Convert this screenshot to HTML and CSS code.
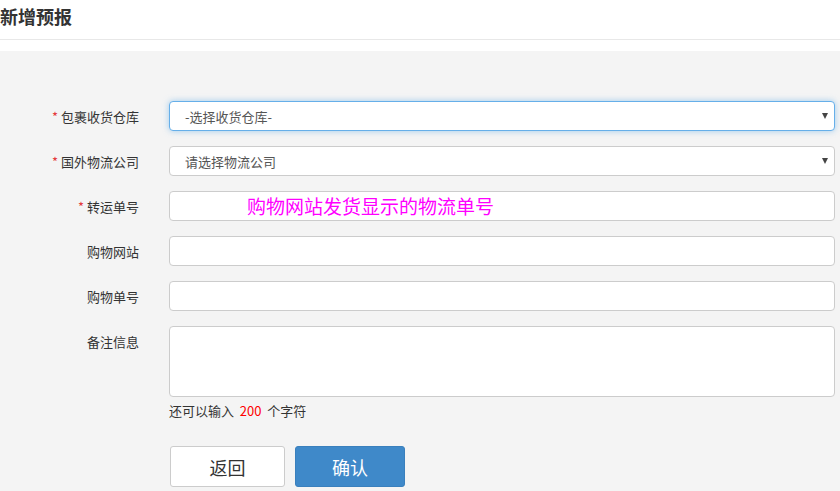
FILE: index.html
```html
<!DOCTYPE html>
<html lang="zh-CN">
<head>
<meta charset="utf-8">
<title>新增预报</title>
<link rel="stylesheet" href="styles.css">
</head>
<body>
<div class="header"><h1 class="title">新增预报</h1></div>
<div class="spacer"></div>
<div class="main">
  <form class="form">
    <div class="row">
      <label class="label"><span class="req">*</span>包裹收货仓库</label>
      <div class="ctrl select-wrap">
        <div class="field select focus">-选择收货仓库-</div>
        <span class="arrow"></span>
      </div>
    </div>
    <div class="row">
      <label class="label"><span class="req">*</span>国外物流公司</label>
      <div class="ctrl select-wrap">
        <div class="field select">请选择物流公司</div>
        <span class="arrow"></span>
      </div>
    </div>
    <div class="row">
      <label class="label"><span class="req">*</span>转运单号</label>
      <div class="ctrl">
        <div class="field input"><span class="ph">购物网站发货显示的物流单号</span></div>
      </div>
    </div>
    <div class="row">
      <label class="label">购物网站</label>
      <div class="ctrl"><div class="field input"></div></div>
    </div>
    <div class="row">
      <label class="label">购物单号</label>
      <div class="ctrl"><div class="field input"></div></div>
    </div>
    <div class="row row-area">
      <label class="label label-top">备注信息</label>
      <div class="ctrl">
        <div class="field area"></div>
        <div class="hint">还可以输入&nbsp; <span class="num">200</span>&nbsp; 个字符</div>
      </div>
    </div>
    <div class="row row-btns">
      <div class="label"></div>
      <div class="btns">
        <button type="button" class="btn btn-back">返回</button>
        <button type="button" class="btn btn-ok">确认</button>
      </div>
    </div>
  </form>
</div>
</body>
</html>
```
FILE: styles.css
```css
html, body {
  margin: 0;
  padding: 0;
  height: 100%;
}
body {
  font-family: "Noto Sans CJK SC", "Liberation Sans", sans-serif;
  color: #333;
  background: #f4f4f4;
  font-size: 13px;
}
.header {
  height: 40px;
  background: #fff;
  border-bottom: 1px solid #e8e8e8;
  box-sizing: border-box;
  display: flex;
  align-items: center;
}
.title {
  margin: 0;
  margin-top: -7px;
  font-size: 18px;
  font-weight: bold;
  color: #333;
  line-height: 24px;
}
.spacer {
  height: 11px;
  background: #fff;
}
.main {
  background: #f4f4f4;
  padding: 50px 5px 0 0;
}
.row {
  display: flex;
  align-items: center;
  margin-bottom: 15px;
}
.row-area {
  align-items: flex-start;
  margin-top: 2px;
  margin-bottom: 0;
}
.label {
  width: 139px;
  flex: none;
  text-align: right;
  font-size: 13px;
  color: #333;
  margin-right: 30px;
  box-sizing: border-box;
  padding-top: 2px;
  line-height: 28px;
}
.req {
  color: #e4393c;
  margin-right: 3px;
}
.ctrl {
  flex: 1;
  position: relative;
}
.field {
  box-sizing: border-box;
  height: 30px;
  background: #fff;
  border: 1px solid #ccc;
  border-radius: 4px;
  padding: 1px 14px 0;
  line-height: 28px;
  color: #555;
  font-size: 13px;
}
.select {
  padding-left: 15px;
}
.focus {
  border-color: #66afe9;
  box-shadow: 0 0 6px rgba(102, 175, 233, 0.6);
}
.arrow {
  position: absolute;
  right: 7px;
  top: 12px;
  width: 0;
  height: 0;
  border-left: 3.5px solid transparent;
  border-right: 3.5px solid transparent;
  border-top: 6px solid #444;
}
.input {
  padding-left: 77px;
  padding-top: 0;
}
.ph {
  color: #f0f;
  font-size: 19px;
  line-height: 27px;
}
.area {
  height: 71px;
}
.hint {
  font-size: 13px;
  color: #333;
  margin-top: 4px;
  line-height: 19px;
}
.num {
  color: #f00;
  font-size: 13px;
}
.row-btns {
  margin-top: 26px;
}
.btns {
  display: flex;
  gap: 10px;
  margin-left: 1px;
}
.btn {
  font-family: "Noto Sans CJK SC", "Liberation Sans", sans-serif;
  font-size: 18px;
  height: 41px;
  border-radius: 3px;
  cursor: pointer;
  padding: 0;
}
.btn-back {
  width: 115px;
  background: #fff;
  border: 1px solid #ccc;
  color: #333;
}
.btn-ok {
  width: 110px;
  background: #3f89c9;
  border: 1px solid #3a80bd;
  color: #fff;
}
```
